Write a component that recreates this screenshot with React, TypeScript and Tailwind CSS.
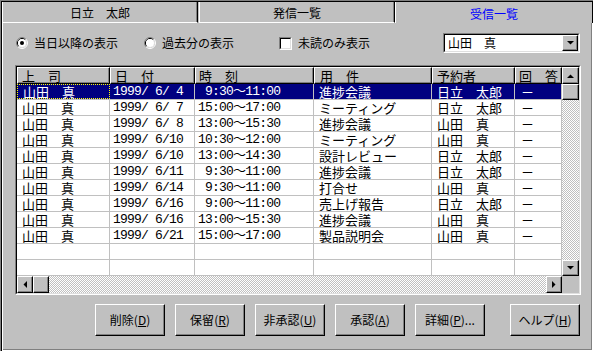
import React from 'react';

const jp = "font-['Noto_Sans_CJK_JP',sans-serif]";
const mono = "font-['Liberation_Mono','Noto_Sans_CJK_JP',monospace] text-[13px] tracking-[-0.8px]";

const raised =
  'bg-[#c0c0c0] border border-t-white border-l-white border-r-black border-b-black shadow-[inset_-1px_-1px_0_#808080]';
const dither =
  'bg-[repeating-conic-gradient(#ffffff_0%_25%,#c0c0c0_0%_50%)] bg-[length:2px_2px]';

type Col = { w: string; pl: string; hpl: string; head: string; mono?: boolean };

const cols: Col[] = [
  { w: 'w-[93px]', pl: 'pl-[5px]', hpl: 'pl-[4px]', head: '上　司' },
  { w: 'w-[85px]', pl: 'pl-[3px]', hpl: 'pl-[4px]', head: '日　付', mono: true },
  { w: 'w-[119px]', pl: 'pl-[3px]', hpl: 'pl-[3px]', head: '時　刻', mono: true },
  { w: 'w-[118px]', pl: 'pl-[5px]', hpl: 'pl-[5px]', head: '用　件' },
  { w: 'w-[83px]', pl: 'pl-[5px]', hpl: 'pl-[4px]', head: '予約者' },
  { w: 'w-[47px]', pl: 'pl-[6px]', hpl: 'pl-[3px]', head: '回　答' },
];

const rows: string[][] = [
  ['山田　真', '1999/ 6/ 4', ' 9:30～11:00', '進捗会議', '日立　太郎', '－'],
  ['山田　真', '1999/ 6/ 7', '15:00～17:00', 'ミーティング', '日立　太郎', '－'],
  ['山田　真', '1999/ 6/ 8', '13:00～15:30', '進捗会議', '山田　真', '－'],
  ['山田　真', '1999/ 6/10', '10:30～12:00', 'ミーティング', '山田　真', '－'],
  ['山田　真', '1999/ 6/10', '13:00～14:30', '設計レビュー', '日立　太郎', '－'],
  ['山田　真', '1999/ 6/11', ' 9:30～11:00', '進捗会議', '日立　太郎', '－'],
  ['山田　真', '1999/ 6/14', ' 9:30～11:00', '打合せ', '山田　真', '－'],
  ['山田　真', '1999/ 6/16', ' 9:00～11:00', '売上げ報告', '日立　太郎', '－'],
  ['山田　真', '1999/ 6/16', '13:00～15:30', '進捗会議', '山田　真', '－'],
  ['山田　真', '1999/ 6/21', '15:00～17:00', '製品説明会', '山田　真', '－'],
  ['', '', '', '', '', ''],
  ['', '', '', '', '', ''],
];

const buttons = [
  { label: '削除', key: 'D' },
  { label: '保留', key: 'R' },
  { label: '非承認', key: 'U' },
  { label: '承認', key: 'A' },
  { label: '詳細', key: 'P', tail: '...' },
];

// 矢印（スクロールバー用）
function Arrow({ dir }: { dir: 'up' | 'down' | 'left' | 'right' }) {
  const pts = {
    up: '0,4 7,4 3.5,0.5',
    down: '0,0 7,0 3.5,3.5',
    left: '4,0 4,7 0.5,3.5',
    right: '0,0 0,7 3.5,3.5',
  }[dir];
  const vert = dir === 'up' || dir === 'down';
  return (
    <svg width={vert ? 7 : 4} height={vert ? 4 : 7} viewBox={vert ? '0 0 7 4' : '0 0 4 7'}>
      <polygon points={pts} fill="#000" />
    </svg>
  );
}

function Radio({ checked }: { checked?: boolean }) {
  return (
    <svg width="12" height="12" viewBox="0 0 12 12" className="shrink-0">
      <path d="M9.89 2.11 A5.5 5.5 0 0 0 2.11 9.89" stroke="#808080" fill="none" />
      <path d="M2.11 9.89 A5.5 5.5 0 0 0 9.89 2.11" stroke="#ffffff" fill="none" />
      <path d="M9.18 2.82 A4.5 4.5 0 0 0 2.82 9.18" stroke="#000000" fill="none" />
      <path d="M2.82 9.18 A4.5 4.5 0 0 0 9.18 2.82" stroke="#dfdfdf" fill="none" />
      <circle cx="6" cy="6" r="4" fill="#ffffff" />
      {checked && <circle cx="6" cy="6" r="2" fill="#000000" />}
    </svg>
  );
}

export default function App() {
  return (
    <div className={`w-[593px] h-[351px] bg-[#c0c0c0] border-l border-t border-[#808080] text-black ${jp}`}>
      <div className="h-full border-l border-t border-black flex flex-col">
        {/* タブ */}
        <div className="flex h-[21px] text-[12px] leading-none">
          <div className="w-[196px] border-l border-white border-b border-b-white border-r border-r-black shadow-[inset_-1px_0_0_#808080] flex items-center justify-center pt-[2px]">
            日立　太郎
          </div>
          <div className="w-[196px] ml-px border-l border-white border-b border-b-white border-r border-r-black shadow-[inset_-1px_0_0_#808080] flex items-center justify-center pt-[2px]">
            発信一覧
          </div>
          <div className="flex-1 border-l border-white border-r border-r-black flex items-center justify-center pt-[2px] text-[#0000ff]">
            受信一覧
          </div>
        </div>

        {/* パネル */}
        <div className="flex-1 border-l border-white border-r border-b border-black">
          <div className="h-full border-r border-b border-[#808080] pl-[13px] pt-[10px] flex flex-col">
            {/* 表示条件 */}
            <div className="flex items-center h-[20px] text-[12px] leading-none">
              <Radio checked />
              <span className="ml-[6px]">当日以降の表示</span>
              <span className="ml-[26px]">
                <Radio />
              </span>
              <span className="ml-[6px]">過去分の表示</span>
              <div className="ml-[45px] w-[13px] h-[13px] border border-t-[#808080] border-l-[#808080] border-r-white border-b-white">
                <div className="w-full h-full bg-white border border-t-black border-l-black border-r-[#dfdfdf] border-b-[#dfdfdf]" />
              </div>
              <span className="ml-[6px]">未読のみ表示</span>
              <div className="ml-[73px] w-[137px] h-[20px] border border-t-[#808080] border-l-[#808080] border-r-white border-b-white">
                <div className="h-full bg-white border border-t-black border-l-black border-r-[#dfdfdf] border-b-[#dfdfdf] flex items-center">
                  <span className="ml-[3px] flex-1 text-[12px]">山田　真</span>
                  <div className={`w-[16px] h-[16px] ${raised} flex items-center justify-center`}>
                    <Arrow dir="down" />
                  </div>
                </div>
              </div>
            </div>

            {/* 一覧 */}
            <div className="mt-[12px] ml-[-1px] w-[566px] h-[230px] border border-t-[#808080] border-l-[#808080] border-r-white border-b-white">
              <div className="h-full bg-white border border-t-black border-l-black border-r-[#dfdfdf] border-b-[#dfdfdf] flex flex-col">
                <div className="flex">
                  <div className="w-[545px]">
                    <div className="flex h-[17px] text-[13px] leading-none">
                      {cols.map((c) => (
                        <div
                          key={c.head}
                          className={`${c.w} ${c.hpl} bg-[#c0c0c0] border-t border-l border-white border-r border-b border-r-black border-b-black shadow-[inset_-1px_-1px_0_#808080] flex items-center`}
                        >
                          {c.head}
                        </div>
                      ))}
                    </div>
                    {rows.map((r, i) => {
                      const sel = i === 0;
                      return (
                        <div
                          key={i}
                          className={`flex h-[16px] border-b border-[#c0c0c0] leading-none ${sel ? 'bg-[#000080] text-white' : ''}`}
                        >
                          {r.map((v, j) => (
                            <div
                              key={j}
                              className={`${cols[j].w} ${cols[j].pl} h-full flex items-center whitespace-pre ${
                                cols[j].mono ? mono : 'text-[13px]'
                              } ${
                                sel && j === 0
                                  ? 'border border-dotted border-[#ffff00]'
                                  : 'border-r border-[#c0c0c0]'
                              } ${sel && j !== 0 ? 'border-[#000080]' : ''}`}
                            >
                              {v}
                            </div>
                          ))}
                        </div>
                      );
                    })}
                  </div>
                  {/* 縦スクロールバー */}
                  <div className="w-[17px] h-[209px] flex flex-col">
                    <div className={`h-[17px] ${raised} flex items-center justify-center`}>
                      <Arrow dir="up" />
                    </div>
                    <div className={`h-[16px] ${raised}`} />
                    <div className={`flex-1 ${dither}`} />
                    <div className={`h-[16px] ${raised} flex items-center justify-center`}>
                      <Arrow dir="down" />
                    </div>
                  </div>
                </div>
                {/* 横スクロールバー */}
                <div className="flex h-[17px]">
                  <div className="w-[545px] flex">
                    <div className={`w-[16px] ${raised} flex items-center justify-center`}>
                      <Arrow dir="left" />
                    </div>
                    <div className={`w-[16px] ${raised}`} />
                    <div className={`flex-1 ${dither}`} />
                    <div className={`w-[16px] ${raised} flex items-center justify-center`}>
                      <Arrow dir="right" />
                    </div>
                  </div>
                  <div className="w-[17px] bg-[#c0c0c0]" />
                </div>
              </div>
            </div>

            {/* ボタン */}
            <div className="flex mt-[9px] ml-[79px] text-[12px] leading-none">
              {buttons.map((b) => (
                <div key={b.key} className={`w-[70px] h-[32px] mr-[10px] ${raised} flex items-center justify-center`}>
                  {b.label}(<u>{b.key}</u>){b.tail}
                </div>
              ))}
              <div className={`w-[70px] h-[32px] ml-[15px] ${raised} flex items-center justify-center`}>
                ヘルプ(<u>H</u>)
              </div>
            </div>
          </div>
        </div>
      </div>
    </div>
  );
}
